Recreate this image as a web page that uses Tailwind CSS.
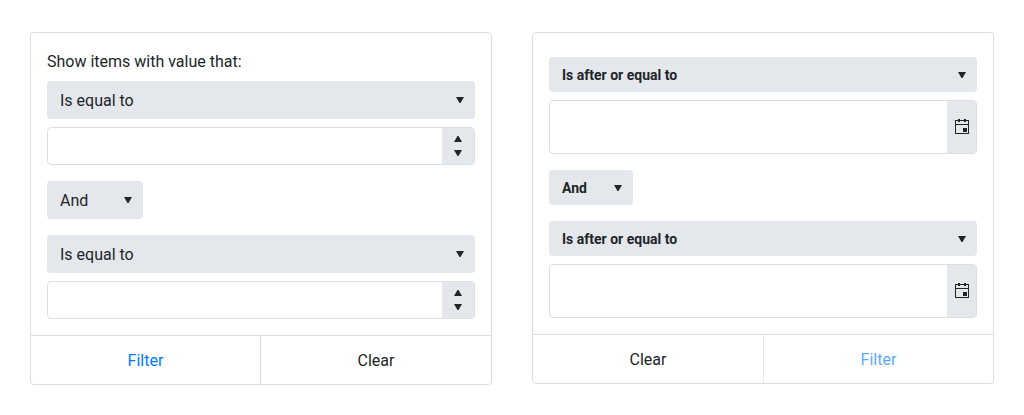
<!DOCTYPE html>
<html lang="en">
<head>
<meta charset="utf-8">
<meta name="viewport" content="width=device-width, initial-scale=1">
<title>Filter menus</title>
<script src="https://cdn.jsdelivr.net/npm/@tailwindcss/browser@4"></script>
</head>
<body class="bg-white text-base text-[#212529] font-[Roboto,sans-serif]">
<svg class="hidden" aria-hidden="true">
  <symbol id="caret" viewBox="0 0 8 6"><path d="M0 0h8L4.5 6h-1z"/></symbol>
  <symbol id="caret-up" viewBox="0 0 8 6"><path d="M0 6h8L4.5 0h-1z"/></symbol>
  <symbol id="calendar" viewBox="0 0 14 16"><path fill-rule="evenodd" d="M0 1h3V0h2v1h4V0h2v1h3v14H0zM1 2v3h12V2h-2v1H9V2H5v1H3V2zM1 6v8h12V6zM8 9h4v4H8z"/></symbol>
</svg>
<main class="grid grid-cols-2 items-start gap-10 px-[30px] py-8">

  <form class="rounded border border-[#dedede]">
    <div class="flex flex-col gap-4 p-4">
      <div class="flex flex-col gap-2">
        <p class="h-6 leading-[26px]">Show items with value that:</p>
        <div class="relative">
          <select aria-label="First condition" class="block h-[38px] w-full appearance-none rounded bg-[#e4e7eb] pt-0.5 pr-8 pl-[13px]"><option>Is equal to</option></select>
          <svg class="pointer-events-none absolute inset-y-0 right-[11px] my-auto h-1.5 w-2 fill-current"><use href="#caret"/></svg>
        </div>
        <div class="flex h-[38px] overflow-hidden rounded border border-[#dedede]">
          <input type="text" inputmode="decimal" aria-label="First value" class="min-w-0 flex-1 px-3 outline-none">
          <div class="flex w-8 flex-col bg-[#e4e7eb]">
            <button type="button" aria-label="Increase first value" class="flex flex-1 items-end justify-center pb-1"><svg class="h-1.5 w-2 fill-current"><use href="#caret-up"/></svg></button>
            <button type="button" aria-label="Decrease first value" class="flex flex-1 items-start justify-center pt-1"><svg class="h-1.5 w-2 fill-current"><use href="#caret"/></svg></button>
          </div>
        </div>
      </div>
      <div class="relative w-24">
        <select aria-label="Logic" class="block h-[38px] w-full appearance-none rounded bg-[#e4e7eb] pt-0.5 pr-8 pl-[13px]"><option>And</option><option>Or</option></select>
        <svg class="pointer-events-none absolute inset-y-0 right-[11px] my-auto h-1.5 w-2 fill-current"><use href="#caret"/></svg>
      </div>
      <div class="flex flex-col gap-2">
        <div class="relative">
          <select aria-label="Second condition" class="block h-[38px] w-full appearance-none rounded bg-[#e4e7eb] pt-0.5 pr-8 pl-[13px]"><option>Is equal to</option></select>
          <svg class="pointer-events-none absolute inset-y-0 right-[11px] my-auto h-1.5 w-2 fill-current"><use href="#caret"/></svg>
        </div>
        <div class="flex h-[38px] overflow-hidden rounded border border-[#dedede]">
          <input type="text" inputmode="decimal" aria-label="Second value" class="min-w-0 flex-1 px-3 outline-none">
          <div class="flex w-8 flex-col bg-[#e4e7eb]">
            <button type="button" aria-label="Increase second value" class="flex flex-1 items-end justify-center pb-1"><svg class="h-1.5 w-2 fill-current"><use href="#caret-up"/></svg></button>
            <button type="button" aria-label="Decrease second value" class="flex flex-1 items-start justify-center pt-1"><svg class="h-1.5 w-2 fill-current"><use href="#caret"/></svg></button>
          </div>
        </div>
      </div>
    </div>
    <div class="grid grid-cols-2 border-t border-[#dedede]">
      <button type="submit" class="h-12 border-r border-[#dedede] pt-0.5 text-[#007bff]">Filter</button>
      <button type="reset" class="h-12 pt-0.5">Clear</button>
    </div>
  </form>

  <form class="rounded border border-[#dedede]">
    <div class="flex flex-col gap-4 px-4 pt-6 pb-4">
      <div class="flex flex-col gap-2">
        <div class="relative">
          <select aria-label="First date condition" class="block h-[35px] w-full appearance-none rounded bg-[#e4e7eb] pr-8 pl-[13px] text-sm font-bold"><option>Is after or equal to</option></select>
          <svg class="pointer-events-none absolute inset-y-0 right-[11px] my-auto h-1.5 w-2 fill-current"><use href="#caret"/></svg>
        </div>
        <div class="flex h-[54px] overflow-hidden rounded border border-[#dedede]">
          <input type="text" aria-label="First date" class="min-w-0 flex-1 px-3 outline-none">
          <button type="button" aria-label="Open first calendar" class="flex items-center bg-[#e4e7eb] pr-[7px] pl-2"><svg class="h-4 w-3.5 fill-current"><use href="#calendar"/></svg></button>
        </div>
      </div>
      <div class="relative w-21">
        <select aria-label="Date logic" class="block h-[35px] w-full appearance-none rounded bg-[#e4e7eb] pr-8 pl-[13px] text-sm font-bold"><option>And</option><option>Or</option></select>
        <svg class="pointer-events-none absolute inset-y-0 right-[11px] my-auto h-1.5 w-2 fill-current"><use href="#caret"/></svg>
      </div>
      <div class="flex flex-col gap-2">
        <div class="relative">
          <select aria-label="Second date condition" class="block h-[35px] w-full appearance-none rounded bg-[#e4e7eb] pr-8 pl-[13px] text-sm font-bold"><option>Is after or equal to</option></select>
          <svg class="pointer-events-none absolute inset-y-0 right-[11px] my-auto h-1.5 w-2 fill-current"><use href="#caret"/></svg>
        </div>
        <div class="flex h-[54px] overflow-hidden rounded border border-[#dedede]">
          <input type="text" aria-label="Second date" class="min-w-0 flex-1 px-3 outline-none">
          <button type="button" aria-label="Open second calendar" class="flex items-center bg-[#e4e7eb] pr-[7px] pl-2"><svg class="h-4 w-3.5 fill-current"><use href="#calendar"/></svg></button>
        </div>
      </div>
    </div>
    <div class="grid grid-cols-2 border-t border-[#dedede]">
      <button type="reset" class="h-12 pt-0.5">Clear</button>
      <button type="submit" disabled class="h-12 border-l border-[#dedede] pt-0.5 text-[#007bff] opacity-65">Filter</button>
    </div>
  </form>
</main>
</body>
</html>
